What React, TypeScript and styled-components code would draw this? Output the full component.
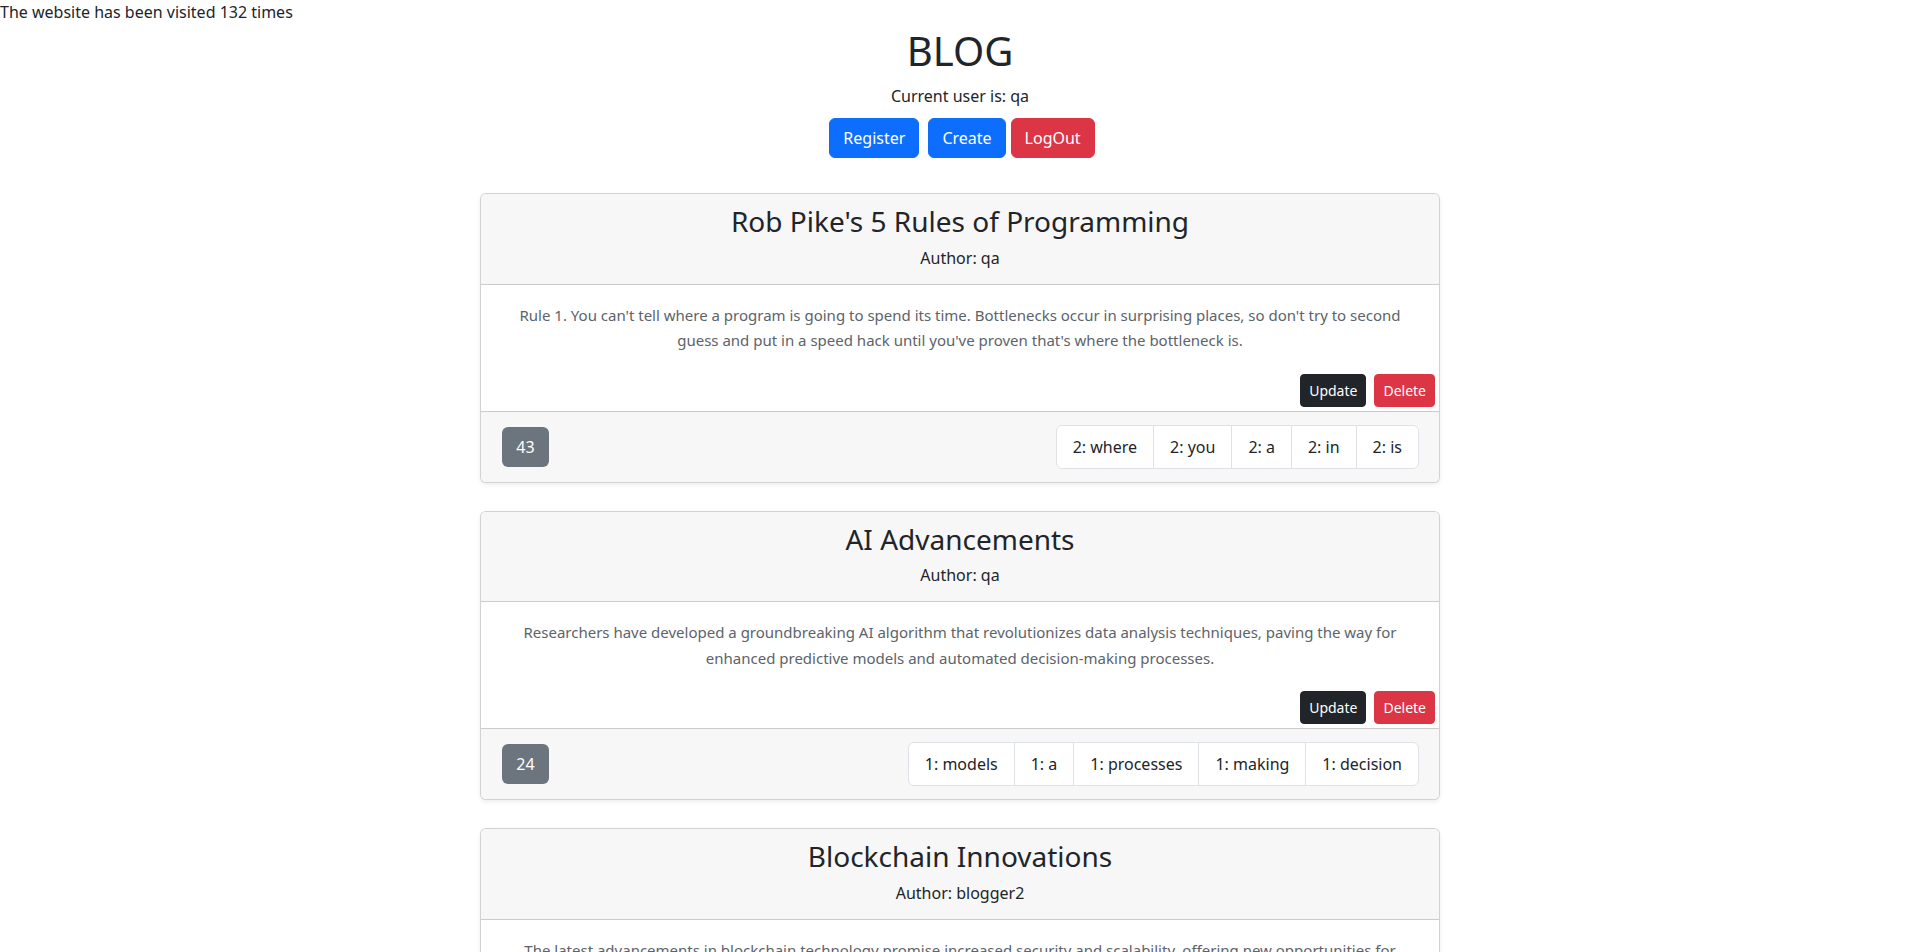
import React from "react";
import styled, { createGlobalStyle } from "styled-components";

const GlobalStyle = createGlobalStyle`
  html, body {
    margin: 0;
    padding: 0;
    background: #ffffff;
  }
  body {
    font-family: "Noto Sans", "Open Sans", "Liberation Sans", sans-serif;
    font-size: 16px;
    line-height: 1.5;
    color: #212529;
  }
  * { box-sizing: border-box; }
`;

const Page = styled.div`
  display: flex;
  flex-direction: column;
  padding-bottom: 40px;
`;

const VisitCounter = styled.div`
  font-size: 16px;
  line-height: 24px;
  height: 24px;
`;

const Masthead = styled.header`
  display: flex;
  flex-direction: column;
  align-items: center;
  text-align: center;
`;

const SiteTitle = styled.h1`
  margin: 3px 0 9px;
  font-size: 40px;
  line-height: 48px;
  font-weight: 400;
`;

const CurrentUser = styled.p`
  margin: 0;
  font-size: 16px;
  line-height: 24px;
`;

const ButtonRow = styled.div`
  display: flex;
  justify-content: center;
  margin-top: 10px;
  padding-left: 4px;
`;

const NavButton = styled.button<{ $variant: "primary" | "danger"; $spaceAfter?: number }>`
  height: 40px;
  padding: 0 13px;
  margin-right: ${(p) => p.$spaceAfter ?? 0}px;
  border: 1px solid ${(p) => (p.$variant === "primary" ? "#0d6efd" : "#dc3545")};
  background: ${(p) => (p.$variant === "primary" ? "#0d6efd" : "#dc3545")};
  color: #ffffff;
  font-family: inherit;
  font-size: 16px;
  line-height: 24px;
  border-radius: 6px;
  cursor: pointer;
`;

const PostList = styled.main`
  display: flex;
  flex-direction: column;
  gap: 28px;
  width: 960px;
  margin: 35px auto 0;
`;

const Card = styled.article`
  display: flex;
  flex-direction: column;
  border: 1px solid rgba(0, 0, 0, 0.175);
  border-radius: 6px;
  background: #ffffff;
  box-shadow: 0 2px 4px rgba(0, 0, 0, 0.075);
  overflow: hidden;
`;

const CardHeader = styled.div`
  padding: 11px 16px 14px;
  background: #f7f7f7;
  border-bottom: 1px solid rgba(0, 0, 0, 0.175);
  text-align: center;
`;

const PostTitle = styled.h3`
  margin: 0 0 7px;
  font-size: 28px;
  line-height: 33.6px;
  font-weight: 400;
`;

const Author = styled.div`
  font-size: 16px;
  line-height: 24px;
`;

const CardBody = styled.div`
  padding: 18px 16px 16px;
  text-align: center;
`;

const PostText = styled.p`
  margin: 0;
  font-size: 15px;
  line-height: 25.5px;
  color: #5c636a;
`;

const Actions = styled.div`
  display: flex;
  justify-content: flex-end;
  gap: 8px;
  padding: 4px;
`;

const SmallButton = styled.button<{ $variant: "dark" | "danger" }>`
  height: 33px;
  padding: 0 8px;
  border: 1px solid ${(p) => (p.$variant === "dark" ? "#212529" : "#dc3545")};
  background: ${(p) => (p.$variant === "dark" ? "#212529" : "#dc3545")};
  color: #ffffff;
  font-family: inherit;
  font-size: 14px;
  line-height: 21px;
  border-radius: 4px;
  cursor: pointer;
`;

const CardFooter = styled.div`
  display: flex;
  justify-content: space-between;
  align-items: center;
  padding: 13px 20px 13px 21px;
  background: #f7f7f7;
  border-top: 1px solid rgba(0, 0, 0, 0.175);
`;

const CountBadge = styled.span`
  display: inline-flex;
  align-items: center;
  justify-content: center;
  height: 40px;
  min-width: 47px;
  padding: 0 14px;
  border-radius: 6px;
  background: #6c757d;
  color: #ffffff;
  font-size: 16px;
  line-height: 24px;
`;

const WordList = styled.ul`
  display: flex;
  margin: 0;
  padding: 0;
  list-style: none;
  border: 1px solid #dee2e6;
  border-radius: 6px;
  background: #ffffff;
  overflow: hidden;
`;

const WordItem = styled.li`
  display: flex;
  align-items: center;
  height: 42px;
  padding: 0 16px;
  font-size: 16px;
  line-height: 24px;
  color: #212529;
  & + & {
    border-left: 1px solid #dee2e6;
  }
`;

type Post = {
  title: string;
  author: string;
  text: string;
  count: number;
  words: string[];
};

const posts: Post[] = [
  {
    title: "Rob Pike's 5 Rules of Programming",
    author: "qa",
    text:
      "Rule 1. You can't tell where a program is going to spend its time. Bottlenecks occur in surprising places, so don't try to second guess and put in a speed hack until you've proven that's where the bottleneck is.",
    count: 43,
    words: ["2: where", "2: you", "2: a", "2: in", "2: is"],
  },
  {
    title: "AI Advancements",
    author: "qa",
    text:
      "Researchers have developed a groundbreaking AI algorithm that revolutionizes data analysis techniques, paving the way for enhanced predictive models and automated decision-making processes.",
    count: 24,
    words: ["1: models", "1: a", "1: processes", "1: making", "1: decision"],
  },
  {
    title: "Blockchain Innovations",
    author: "blogger2",
    text:
      "The latest advancements in blockchain technology promise increased security and scalability, offering new opportunities for decentralized applications and digital transactions.",
    count: 21,
    words: ["1: blockchain", "1: security", "1: new", "1: for", "1: digital"],
  },
];

export default function App() {
  return (
    <>
      <GlobalStyle />
      <Page>
        <VisitCounter>The website has been visited 132 times</VisitCounter>
        <Masthead>
          <SiteTitle>BLOG</SiteTitle>
          <CurrentUser>Current user is: qa</CurrentUser>
          <ButtonRow>
            <NavButton $variant="primary" $spaceAfter={9}>Register</NavButton>
            <NavButton $variant="primary" $spaceAfter={5}>Create</NavButton>
            <NavButton $variant="danger">LogOut</NavButton>
          </ButtonRow>
        </Masthead>
        <PostList>
          {posts.map((post) => (
            <Card key={post.title}>
              <CardHeader>
                <PostTitle>{post.title}</PostTitle>
                <Author>Author: {post.author}</Author>
              </CardHeader>
              <CardBody>
                <PostText>{post.text}</PostText>
              </CardBody>
              <Actions>
                <SmallButton $variant="dark">Update</SmallButton>
                <SmallButton $variant="danger">Delete</SmallButton>
              </Actions>
              <CardFooter>
                <CountBadge>{post.count}</CountBadge>
                <WordList>
                  {post.words.map((w) => (
                    <WordItem key={w}>{w}</WordItem>
                  ))}
                </WordList>
              </CardFooter>
            </Card>
          ))}
        </PostList>
      </Page>
    </>
  );
}
